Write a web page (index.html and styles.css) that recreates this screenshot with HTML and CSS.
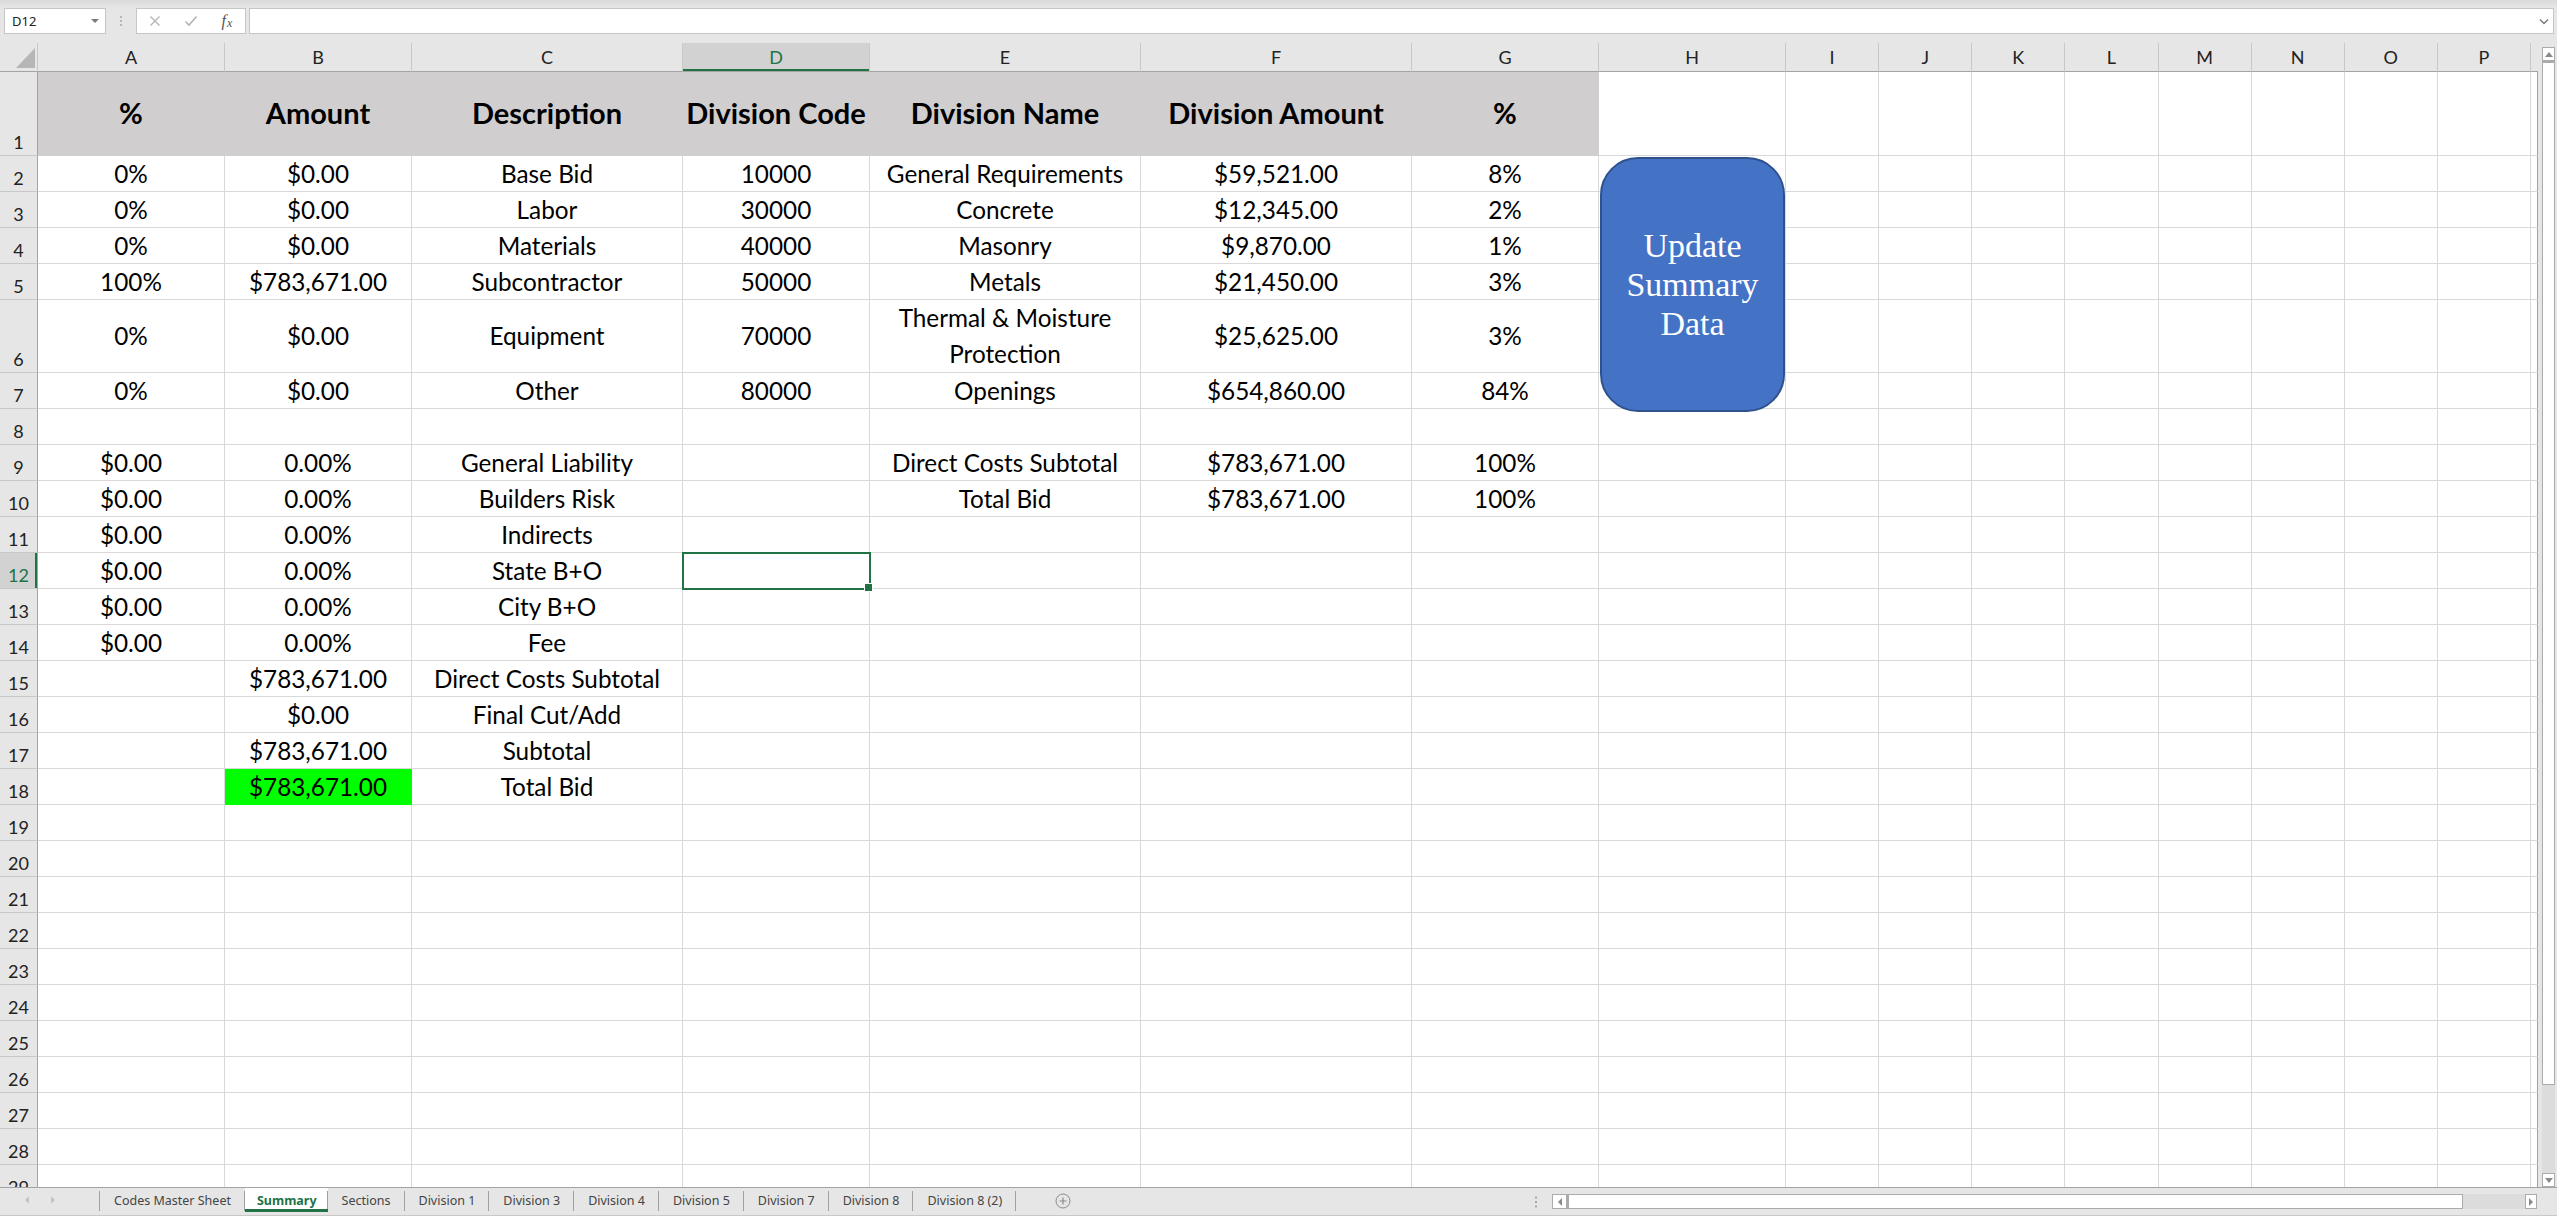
FILE: index.html
```html
<!DOCTYPE html>
<html>
<head>
<meta charset="utf-8">
<title>Summary</title>
<link rel="stylesheet" href="styles.css">
</head>
<body>
<div class="app">
  <div class="fbar">
    <div class="namebox"><span>D12</span><span class="nb-arrow"></span></div>
    <div class="fdots"><svg width="4" height="12" viewBox="0 0 4 12"><circle cx="2" cy="2" r="1" fill="#a6a6a6"/><circle cx="2" cy="6" r="1" fill="#a6a6a6"/><circle cx="2" cy="10" r="1" fill="#a6a6a6"/></svg></div>
    <div class="fbtns">
      <div class="fb"><svg width="12" height="12" viewBox="0 0 12 12"><path d="M1.5 1.5L10.5 10.5M10.5 1.5L1.5 10.5" stroke="#b4b4b4" stroke-width="1.3" fill="none"/></svg></div>
      <div class="fb"><svg width="14" height="12" viewBox="0 0 14 12"><path d="M1.5 6.5L5 10L12.5 1.5" stroke="#b4b4b4" stroke-width="1.6" fill="none"/></svg></div>
      <div class="fb fx"><i>f</i><i class="fxx">x</i></div>
    </div>
    <div class="finput"><svg width="10" height="7" viewBox="0 0 10 7"><path d="M1 1.5L5 5.5L9 1.5" stroke="#777" stroke-width="1.4" fill="none"/></svg></div>
  </div>

  <div class="main">
    <div class="sheet">
      <table class="grid">
        <colgroup>
          <col class="w-rh"><col class="w-s"><col class="w-s"><col class="w-l"><col class="w-s"><col class="w-l"><col class="w-l"><col class="w-s"><col class="w-s">
          <col class="w-n"><col class="w-n"><col class="w-n"><col class="w-n"><col class="w-n"><col class="w-n"><col class="w-n"><col class="w-n"><col class="w-q">
        </colgroup>
        <tr class="hdr">
          <th class="corner"><svg width="38" height="28" viewBox="0 0 38 28"><path d="M16 25H35V5Z" fill="#b6b6b6"/></svg></th>
          <th class="ch">A</th><th class="ch">B</th><th class="ch">C</th><th class="ch sel-col">D</th><th class="ch">E</th><th class="ch">F</th><th class="ch">G</th><th class="ch">H</th>
          <th class="ch">I</th><th class="ch">J</th><th class="ch">K</th><th class="ch">L</th><th class="ch">M</th><th class="ch">N</th><th class="ch">O</th><th class="ch">P</th><th class="ch last"></th>
        </tr>
        <tr class="r1"><th class="rh">1</th><td class="h">%</td><td class="h">Amount</td><td class="h">Description</td><td class="h">Division Code</td><td class="h">Division Name</td><td class="h">Division Amount</td><td class="h">%</td><td></td><td></td><td></td><td></td><td></td><td></td><td></td><td></td><td></td><td></td></tr>
        <tr class="r"><th class="rh">2</th><td>0%</td><td>$0.00</td><td>Base Bid</td><td>10000</td><td>General Requirements</td><td>$59,521.00</td><td>8%</td><td></td><td></td><td></td><td></td><td></td><td></td><td></td><td></td><td></td><td></td></tr>
        <tr class="r"><th class="rh">3</th><td>0%</td><td>$0.00</td><td>Labor</td><td>30000</td><td>Concrete</td><td>$12,345.00</td><td>2%</td><td></td><td></td><td></td><td></td><td></td><td></td><td></td><td></td><td></td><td></td></tr>
        <tr class="r"><th class="rh">4</th><td>0%</td><td>$0.00</td><td>Materials</td><td>40000</td><td>Masonry</td><td>$9,870.00</td><td>1%</td><td></td><td></td><td></td><td></td><td></td><td></td><td></td><td></td><td></td><td></td></tr>
        <tr class="r"><th class="rh">5</th><td>100%</td><td>$783,671.00</td><td>Subcontractor</td><td>50000</td><td>Metals</td><td>$21,450.00</td><td>3%</td><td></td><td></td><td></td><td></td><td></td><td></td><td></td><td></td><td></td><td></td></tr>
        <tr class="r6"><th class="rh">6</th><td>0%</td><td>$0.00</td><td>Equipment</td><td>70000</td><td class="wrap">Thermal &amp; Moisture<br>Protection</td><td>$25,625.00</td><td>3%</td><td></td><td></td><td></td><td></td><td></td><td></td><td></td><td></td><td></td><td></td></tr>
        <tr class="r"><th class="rh">7</th><td>0%</td><td>$0.00</td><td>Other</td><td>80000</td><td>Openings</td><td>$654,860.00</td><td>84%</td><td></td><td></td><td></td><td></td><td></td><td></td><td></td><td></td><td></td><td></td></tr>
        <tr class="r"><th class="rh">8</th><td></td><td></td><td></td><td></td><td></td><td></td><td></td><td></td><td></td><td></td><td></td><td></td><td></td><td></td><td></td><td></td><td></td></tr>
        <tr class="r"><th class="rh">9</th><td>$0.00</td><td>0.00%</td><td>General Liability</td><td></td><td>Direct Costs Subtotal</td><td>$783,671.00</td><td>100%</td><td></td><td></td><td></td><td></td><td></td><td></td><td></td><td></td><td></td><td></td></tr>
        <tr class="r"><th class="rh">10</th><td>$0.00</td><td>0.00%</td><td>Builders Risk</td><td></td><td>Total Bid</td><td>$783,671.00</td><td>100%</td><td></td><td></td><td></td><td></td><td></td><td></td><td></td><td></td><td></td><td></td></tr>
        <tr class="r"><th class="rh">11</th><td>$0.00</td><td>0.00%</td><td>Indirects</td><td></td><td></td><td></td><td></td><td></td><td></td><td></td><td></td><td></td><td></td><td></td><td></td><td></td><td></td></tr>
        <tr class="r"><th class="rh sel-row">12</th><td>$0.00</td><td>0.00%</td><td>State B+O</td><td class="cur"></td><td></td><td></td><td></td><td></td><td></td><td></td><td></td><td></td><td></td><td></td><td></td><td></td><td></td></tr>
        <tr class="r"><th class="rh">13</th><td>$0.00</td><td>0.00%</td><td>City B+O</td><td></td><td></td><td></td><td></td><td></td><td></td><td></td><td></td><td></td><td></td><td></td><td></td><td></td><td></td></tr>
        <tr class="r"><th class="rh">14</th><td>$0.00</td><td>0.00%</td><td>Fee</td><td></td><td></td><td></td><td></td><td></td><td></td><td></td><td></td><td></td><td></td><td></td><td></td><td></td><td></td></tr>
        <tr class="r"><th class="rh">15</th><td></td><td>$783,671.00</td><td>Direct Costs Subtotal</td><td></td><td></td><td></td><td></td><td></td><td></td><td></td><td></td><td></td><td></td><td></td><td></td><td></td><td></td></tr>
        <tr class="r"><th class="rh">16</th><td></td><td>$0.00</td><td>Final Cut/Add</td><td></td><td></td><td></td><td></td><td></td><td></td><td></td><td></td><td></td><td></td><td></td><td></td><td></td><td></td></tr>
        <tr class="r"><th class="rh">17</th><td></td><td>$783,671.00</td><td>Subtotal</td><td></td><td></td><td></td><td></td><td></td><td></td><td></td><td></td><td></td><td></td><td></td><td></td><td></td><td></td></tr>
        <tr class="r"><th class="rh">18</th><td></td><td class="green">$783,671.00</td><td>Total Bid</td><td></td><td></td><td></td><td></td><td></td><td></td><td></td><td></td><td></td><td></td><td></td><td></td><td></td><td></td></tr>
        <tr class="r"><th class="rh">19</th><td></td><td></td><td></td><td></td><td></td><td></td><td></td><td></td><td></td><td></td><td></td><td></td><td></td><td></td><td></td><td></td><td></td></tr>
        <tr class="r"><th class="rh">20</th><td></td><td></td><td></td><td></td><td></td><td></td><td></td><td></td><td></td><td></td><td></td><td></td><td></td><td></td><td></td><td></td><td></td></tr>
        <tr class="r"><th class="rh">21</th><td></td><td></td><td></td><td></td><td></td><td></td><td></td><td></td><td></td><td></td><td></td><td></td><td></td><td></td><td></td><td></td><td></td></tr>
        <tr class="r"><th class="rh">22</th><td></td><td></td><td></td><td></td><td></td><td></td><td></td><td></td><td></td><td></td><td></td><td></td><td></td><td></td><td></td><td></td><td></td></tr>
        <tr class="r"><th class="rh">23</th><td></td><td></td><td></td><td></td><td></td><td></td><td></td><td></td><td></td><td></td><td></td><td></td><td></td><td></td><td></td><td></td><td></td></tr>
        <tr class="r"><th class="rh">24</th><td></td><td></td><td></td><td></td><td></td><td></td><td></td><td></td><td></td><td></td><td></td><td></td><td></td><td></td><td></td><td></td><td></td></tr>
        <tr class="r"><th class="rh">25</th><td></td><td></td><td></td><td></td><td></td><td></td><td></td><td></td><td></td><td></td><td></td><td></td><td></td><td></td><td></td><td></td><td></td></tr>
        <tr class="r"><th class="rh">26</th><td></td><td></td><td></td><td></td><td></td><td></td><td></td><td></td><td></td><td></td><td></td><td></td><td></td><td></td><td></td><td></td><td></td></tr>
        <tr class="r"><th class="rh">27</th><td></td><td></td><td></td><td></td><td></td><td></td><td></td><td></td><td></td><td></td><td></td><td></td><td></td><td></td><td></td><td></td><td></td></tr>
        <tr class="r"><th class="rh">28</th><td></td><td></td><td></td><td></td><td></td><td></td><td></td><td></td><td></td><td></td><td></td><td></td><td></td><td></td><td></td><td></td><td></td></tr>
        <tr class="r"><th class="rh">29</th><td></td><td></td><td></td><td></td><td></td><td></td><td></td><td></td><td></td><td></td><td></td><td></td><td></td><td></td><td></td><td></td><td></td></tr>
      </table>
      <div class="macro">Update<br>Summary<br>Data</div>
    </div>
    <div class="vscroll">
      <div class="vs-btn"><span class="tri-up"></span></div>
      <div class="vs-thumb"></div>
      <div class="vs-track"></div>
      <div class="vs-btn"><span class="tri-down"></span></div>
    </div>
  </div>

  <div class="tabbar">
    <div class="tabnav"><span class="tri-left"></span><span class="tri-right"></span></div>
    <div class="tabs">
      <div class="tab">Codes Master Sheet</div>
      <div class="tab active">Summary</div>
      <div class="tab">Sections</div>
      <div class="tab">Division 1</div>
      <div class="tab">Division 3</div>
      <div class="tab">Division 4</div>
      <div class="tab">Division 5</div>
      <div class="tab">Division 7</div>
      <div class="tab">Division 8</div>
      <div class="tab">Division 8 (2)</div>
    </div>
    <div class="addsheet"><svg width="16" height="16" viewBox="0 0 16 16"><circle cx="8" cy="8" r="7" fill="none" stroke="#8c8c8c" stroke-width="1"/><path d="M8 4.5V11.5M4.5 8H11.5" stroke="#8c8c8c" stroke-width="1.2"/></svg></div>
    <div class="hgroup">
      <div class="hsplit"><svg width="4" height="12" viewBox="0 0 4 12"><rect x="1" y="0.5" width="2" height="2" fill="#a6a6a6"/><rect x="1" y="5" width="2" height="2" fill="#a6a6a6"/><rect x="1" y="9.5" width="2" height="2" fill="#a6a6a6"/></svg></div>
      <div class="hscroll">
        <div class="hs-btn hs-l"><span class="tri-sl"></span></div>
        <div class="hs-thumb"></div>
        <div class="hs-track"></div>
        <div class="hs-btn hs-r"><span class="tri-sr"></span></div>
      </div>
    </div>
  </div>
</div>
</body>
</html>
```

FILE: styles.css
```css
* { box-sizing: border-box; }
html, body { margin: 0; padding: 0; }
body {
  width: 2557px;
  height: 1216px;
  overflow: hidden;
  background: #e6e6e6;
  font-family: Lato, "Liberation Sans", sans-serif;
}
.app { display: flex; flex-direction: column; height: 1216px; }

/* formula bar */
.fbar {
  height: 43px;
  flex: 0 0 43px;
  display: flex;
  align-items: flex-start;
  padding: 8px 3px 0 4px;
  background: linear-gradient(#d9d9d9, #e6e6e6 7px);
}
.namebox {
  width: 102px;
  height: 26px;
  background: #fff;
  border: 1px solid #c6c6c6;
  display: flex;
  align-items: center;
  justify-content: space-between;
  padding: 0 6px 0 7px;
  font-family: "Noto Sans", sans-serif;
  font-size: 13px;
  color: #222;
}
.nb-arrow {
  width: 0; height: 0;
  border-left: 4px solid transparent;
  border-right: 4px solid transparent;
  border-top: 4px solid #7a7a7a;
}
.fdots { width: 30px; height: 26px; display: flex; align-items: center; justify-content: center; }
.fbtns {
  width: 110px;
  height: 26px;
  background: #fff;
  border: 1px solid #c6c6c6;
  display: flex;
  align-items: center;
}
.fb { width: 36px; display: flex; justify-content: center; align-items: center; }
.fx {
  font-family: "Liberation Serif", serif;
  font-size: 16px;
  color: #555;
}
.fxx { font-size: 12px; margin-left: 1px; margin-top: 4px; }
.finput {
  flex: 1;
  margin-left: 3px;
  height: 26px;
  background: #fff;
  border: 1px solid #c6c6c6;
  display: flex;
  align-items: center;
  justify-content: flex-end;
  padding-right: 4px;
}

/* main area */
.main { display: flex; height: 1144px; flex: 0 0 1144px; }
.sheet {
  width: 2540px;
  height: 1144px;
  overflow: hidden;
  position: relative;
  background: #e6e6e6;
}
.grid {
  border-collapse: separate;
  border-spacing: 0;
  table-layout: fixed;
  width: 2538px;
}
.w-rh { width: 38px; }
.w-s { width: 187px; }
.w-l { width: 271px; }
.w-n { width: 93.125px; }
.w-q { width: 7px; }

.grid th { font-weight: normal; padding: 0; }
.grid td {
  padding: 0;
  border-right: 1px solid #d9d9d9;
  border-bottom: 1px solid #d9d9d9;
  background: #fff;
  text-align: center;
  vertical-align: middle;
  white-space: nowrap;
  font-size: 24.3px;
  line-height: 1.2;
  color: #000;
}
.grid td:last-child { border-right-color: #a3a3a3; }

.hdr { height: 28px; }
.r1 { height: 84px; }
.r { height: 36px; }
.r6 { height: 73px; }

.corner {
  background: #e6e6e6;
  border-right: 1px solid #c8c8c8;
  border-bottom: 1px solid #a3a3a3;
  line-height: 0;
}
.corner svg { display: block; }
.ch {
  background: #e6e6e6;
  border-right: 1px solid #c8c8c8;
  border-bottom: 1px solid #a3a3a3;
  font-size: 18px;
  color: #222;
  text-align: center;
  vertical-align: middle;
}
.ch.last { border-right: none; }
.rh {
  background: #e6e6e6;
  border-right: 1px solid #a3a3a3;
  border-bottom: 1px solid #c8c8c8;
  font-size: 18px;
  line-height: 20px;
  color: #222;
  text-align: center;
  vertical-align: bottom;
  padding-bottom: 3px !important;
}
.sel-col {
  background: #d2d2d2;
  color: #217346;
  box-shadow: inset 0 -2px 0 #217346;
}
.sel-row {
  background: #d2d2d2;
  color: #217346;
  box-shadow: inset -2px 0 0 #217346;
}

.grid td.h {
  background: #d0cece;
  border-color: #d0cece;
  font-weight: 700;
  font-size: 29px;
}
.grid td.wrap { white-space: normal; line-height: 36px; }
.grid td.green { background: #00ff00; border-color: #00ff00; }
.grid td.cur {
  outline: 2px solid #217346;
  outline-offset: -1px;
  position: relative;
}
.grid td.cur::after {
  content: "";
  position: absolute;
  right: -4px;
  bottom: -4px;
  width: 7px;
  height: 7px;
  background: #217346;
  border: 1px solid #fff;
}

.macro {
  position: absolute;
  left: 1600px;
  top: 114px;
  width: 185px;
  height: 255px;
  background: #4472c4;
  border: 2px solid #2f528f;
  border-radius: 38px;
  display: flex;
  align-items: center;
  justify-content: center;
  text-align: center;
  color: #fff;
  font-family: "Liberation Serif", serif;
  font-size: 34px;
  line-height: 39px;
}

/* vertical scrollbar */
.vscroll {
  width: 17px;
  display: flex;
  flex-direction: column;
  padding: 4px 2px 0 2px;
}
.vs-btn {
  height: 14px;
  flex: 0 0 14px;
  background: #fff;
  border: 1px solid #ababab;
  display: flex;
  align-items: center;
  justify-content: center;
}
.vs-thumb {
  height: 1024px;
  flex: 0 0 1024px;
  background: #fff;
  border: 1px solid #ababab;
  border-top: 2px solid #ababab;
}
.vs-track { flex: 1; background: #dcdcdc; }
.tri-up {
  width: 0; height: 0;
  border-left: 4px solid transparent;
  border-right: 4px solid transparent;
  border-bottom: 5px solid #8a8a8a;
}
.tri-down {
  width: 0; height: 0;
  border-left: 4px solid transparent;
  border-right: 4px solid transparent;
  border-top: 5px solid #8a8a8a;
}

/* tab bar */
.tabbar {
  height: 29px;
  flex: 0 0 29px;
  border-top: 1px solid #a3a3a3;
  border-bottom: 1px solid #c8c8c8;
  display: flex;
  align-items: flex-start;
  padding-right: 20px;
  background: #e6e6e6;
}
.tabnav {
  width: 100px;
  height: 24px;
  display: flex;
  align-items: center;
  padding-left: 25px;
  gap: 22px;
  background: linear-gradient(#a0a0a0, #a0a0a0) right 0 top 3px / 1px 20px no-repeat;
}
.tri-left {
  width: 0; height: 0;
  border-top: 4px solid transparent;
  border-bottom: 4px solid transparent;
  border-right: 4px solid #c4c4c4;
}
.tri-right {
  width: 0; height: 0;
  border-top: 4px solid transparent;
  border-bottom: 4px solid transparent;
  border-left: 4px solid #c4c4c4;
}
.tabs { display: flex; }
.tab {
  height: 24px;
  padding: 0 14px;
  display: flex;
  align-items: center;
  font-family: "Noto Sans", sans-serif;
  font-size: 12.5px;
  color: #444;
  background: linear-gradient(#a0a0a0, #a0a0a0) right 0 top 3px / 1px 20px no-repeat;
}
.tab.active {
  background-color: #fff;
  color: #217346;
  font-weight: 700;
  padding: 0 11px 0 12px;
  box-shadow: inset 0 -3px 0 #217346;
}
.addsheet {
  height: 26px;
  display: flex;
  align-items: center;
  margin-left: 39px;
}
.addsheet svg { display: block; }
.hgroup {
  margin-left: auto;
  height: 27px;
  display: flex;
  align-items: center;
}
.hsplit { width: 16px; display: flex; justify-content: center; margin-right: 8px; }
.hsplit svg { display: block; }
.hscroll {
  width: 985px;
  height: 15px;
  display: flex;
}
.hs-btn {
  background: #fff;
  border: 1px solid #ababab;
  display: flex;
  align-items: center;
  justify-content: center;
}
.hs-l { width: 15px; }
.hs-r { width: 12px; }
.hs-thumb {
  width: 896px;
  background: #fff;
  border: 1px solid #ababab;
  border-left-width: 2px;
}
.hs-track { flex: 1; background: #dcdcdc; }
.tri-sl {
  width: 0; height: 0;
  border-top: 4px solid transparent;
  border-bottom: 4px solid transparent;
  border-right: 4px solid #8a8a8a;
}
.tri-sr {
  width: 0; height: 0;
  border-top: 4px solid transparent;
  border-bottom: 4px solid transparent;
  border-left: 4px solid #8a8a8a;
}
```
